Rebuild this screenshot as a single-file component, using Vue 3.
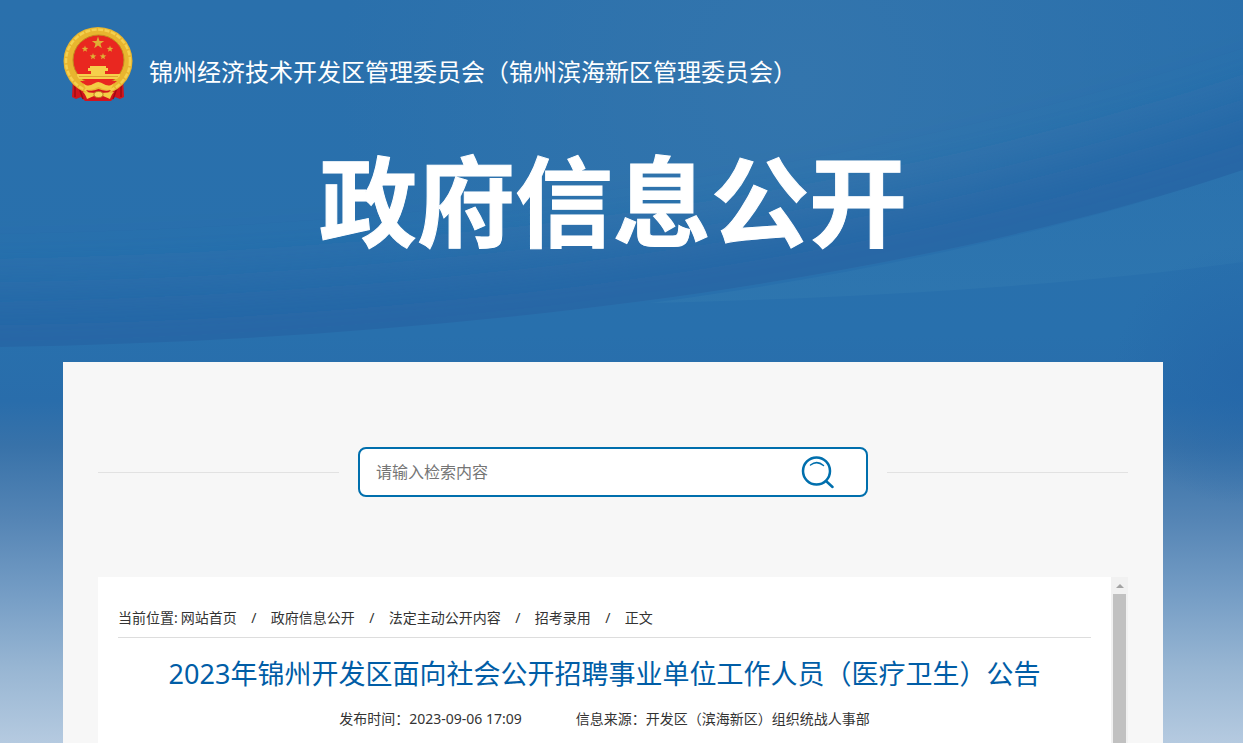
<script setup>
const crumbs = ['网站首页', '政府信息公开', '法定主动公开内容', '招考录用', '正文']
const stars = [
  { x: 48, y: 28, r: 6.5 },
  { x: 35, y: 34, r: 3.5 },
  { x: 60, y: 34, r: 3.5 },
  { x: 43, y: 41.5, r: 3.5 },
  { x: 53, y: 41.5, r: 3.5 },
]
function starPoints({ x, y, r }) {
  return Array.from({ length: 10 }, (_, i) => {
    const d = i % 2 ? r * 0.4 : r
    const a = (Math.PI / 5) * i - Math.PI / 2
    return `${(x + d * Math.cos(a)).toFixed(2)},${(y + d * Math.sin(a)).toFixed(2)}`
  }).join(' ')
}
</script>

<template>
  <div class="page">
    <svg class="backdrop" viewBox="0 0 1243 743" preserveAspectRatio="none" aria-hidden="true">
      <defs>
        <linearGradient id="sky" x1="0" y1="0" x2="0" y2="1">
          <stop offset="0" stop-color="#2a70ac" />
          <stop offset="0.45" stop-color="#2870ad" />
          <stop offset="0.54" stop-color="#296dab" />
          <stop offset="0.6" stop-color="#3872a9" />
          <stop offset="0.7" stop-color="#5585b5" />
          <stop offset="0.8" stop-color="#759dc5" />
          <stop offset="0.9" stop-color="#98b6d3" />
          <stop offset="1" stop-color="#b5cae0" />
        </linearGradient>
        <radialGradient id="glow" gradientUnits="userSpaceOnUse" cx="800" cy="80" r="460">
          <stop offset="0" stop-color="#3375ad" />
          <stop offset="1" stop-color="#3375ad" stop-opacity="0" />
        </radialGradient>
        <radialGradient id="corner" gradientUnits="userSpaceOnUse" cx="1243" cy="375" r="130">
          <stop offset="0" stop-color="#2466a8" stop-opacity="0.8" />
          <stop offset="1" stop-color="#2466a8" stop-opacity="0" />
        </radialGradient>
        <linearGradient id="band" x1="0" y1="0" x2="0" y2="1">
          <stop offset="0" stop-color="#2e76b0" stop-opacity="0.4" />
          <stop offset="1" stop-color="#3179b0" stop-opacity="0.6" />
        </linearGradient>
        <clipPath id="above">
          <path d="M0 0H1243V170C900 285 440 340 0 347Z" />
        </clipPath>
        <filter id="soft" x="-20%" y="-60%" width="140%" height="220%">
          <feGaussianBlur stdDeviation="30" />
        </filter>
      </defs>
      <path d="M0 0H1243V743H0Z" fill="url(#sky)" />
      <g clip-path="url(#above)">
        <path d="M0 0H1243V360H0Z" fill="url(#glow)" />
        <path
          d="M-80 348C420 345 900 290 1340 135"
          fill="none"
          stroke="#2464a4"
          stroke-width="110"
          stroke-opacity="0.85"
          filter="url(#soft)"
        />
      </g>
      <path d="M1243 170C1060 232 860 275 650 303C850 298 1060 287 1243 262Z" fill="url(#band)" />
      <path d="M1083 245H1243V535H1083Z" fill="url(#corner)" />
    </svg>

    <div class="container">
      <header class="brand">
        <svg class="emblem" viewBox="13 11 70 76" role="img" aria-label="国徽">
          <path d="M23 62L22 82L26 84L31 82L35 86H61L65 82L70 84L74 82L73 62Z" fill="#d3141c" />
          <path d="M28 70L33 84M68 70L63 84M25 70L25 82M71 70L71 82" stroke="#9e0b13" stroke-width="1.5" fill="none" />
          <ellipse cx="48" cy="46" rx="34.5" ry="34" fill="#e8b52f" />
          <ellipse cx="48" cy="46" rx="32" ry="31.5" fill="none" stroke="#f5d04e" stroke-width="2.5" stroke-dasharray="5 1.5" />
          <ellipse cx="48.5" cy="45" rx="25.5" ry="25" fill="#e92720" stroke="#c38b1f" stroke-width="1" />
          <polygon v-for="(s, i) in stars" :key="i" :points="starPoints(s)" fill="#dfae35" />
          <path d="M40 51H56V53H58V56H55V59H70V61L67 64H29L27 61V59H41V56H38V53H40Z" fill="#f6cf4b" />
          <path d="M29 61.5H68" stroke="#e0a030" stroke-width="1" />
          <path d="M30 66H67L61 71L54 70L48.5 67L43 70L36 71Z" fill="#e92720" />
          <path d="M33 68C39 74 42 68 48.5 67C54 68 58 74 64 68L61 74C55 76 53 74 48.5 72C44 74 41 76 36 74Z" fill="#f3cd45" />
          <path d="M36 75Q42 77 48.5 74Q55 77 61 75L58 78H39Z" fill="#d3141c" />
          <path d="M33 77L46 78L44 81L37 84C36 81 35 79 33 77ZM64 77L51 78L53 81L60 84C61 81 62 79 64 77Z" fill="#f3cd45" />
          <ellipse cx="48.5" cy="79.5" rx="4.5" ry="3" fill="#f8d95b" stroke="#b97919" stroke-width="1" />
        </svg>
        <span class="org">锦州经济技术开发区管理委员会（锦州滨海新区管理委员会）</span>
      </header>

      <h1 class="headline">政府信息公开</h1>

      <main class="sheet">
        <form class="search" @submit.prevent>
          <div class="search-box">
            <input type="text" aria-label="检索内容" placeholder="请输入检索内容" />
            <button type="submit" aria-label="检索">
              <svg viewBox="0 0 34 34" aria-hidden="true">
                <circle cx="16.5" cy="16" r="13.5" stroke-width="2.5" />
                <path d="M10.5 10Q17 5 23.5 10.5" stroke-width="1.5" />
                <path d="M26 26L32.5 32" stroke-width="2.5" />
              </svg>
            </button>
          </div>
        </form>

        <div class="viewer">
          <article class="article">
            <nav class="crumbs" aria-label="当前位置">
              <span class="here">当前位置:</span>
              <template v-for="(c, i) in crumbs" :key="c">
                <span v-if="i" class="slash">/</span>
                <a href="#">{{ c }}</a>
              </template>
            </nav>
            <h2>2023年锦州开发区面向社会公开招聘事业单位工作人员（医疗卫生）公告</h2>
            <div class="meta">
              <span>发布时间：2023-09-06 17:09</span>
              <span>信息来源：开发区（滨海新区）组织统战人事部</span>
            </div>
          </article>
          <div class="track" aria-hidden="true">
            <div class="arrow"></div>
            <div class="thumb"></div>
          </div>
        </div>
      </main>
    </div>
  </div>
</template>

<style>
html,
body,
#app {
  height: 100%;
}
body {
  margin: 0;
  overflow: hidden;
}
</style>

<style scoped>
.page {
  position: relative;
  min-height: 100%;
  box-sizing: border-box;
  padding-right: 17px;
  font-family: "Noto Sans", "Noto Sans CJK SC", sans-serif;
  font-size: 14px;
  color: #333;
}
.backdrop {
  position: absolute;
  inset: 0;
  width: 100%;
  height: 100%;
}
.container {
  position: relative;
  display: flex;
  flex-direction: column;
  min-height: 100vh;
  max-width: 1100px;
  margin: 0 auto;
}
.brand {
  display: flex;
  align-items: center;
  gap: 16px;
  padding-top: 26px;
  color: #fff;
}
.emblem {
  width: 70px;
  height: 76px;
}
.org {
  padding-top: 16px;
  font-size: 24px;
  line-height: 36px;
}
.headline {
  margin: 0;
  padding: 29px 0 91px;
  text-align: center;
  font-size: 98px;
  line-height: 140px;
  font-weight: 700;
  color: #fff;
  -webkit-text-stroke: 1px #fff;
}
.sheet {
  flex: 1;
  display: flex;
  flex-direction: column;
  padding: 85px 35px 0;
  background: #f7f7f7;
}
.search {
  display: flex;
  align-items: center;
  gap: 19px;
}
.search::before,
.search::after {
  content: "";
  flex: 1;
  height: 1px;
  background: #e2e2e2;
}
.search-box {
  display: flex;
  align-items: center;
  box-sizing: border-box;
  width: 510px;
  height: 50px;
  padding: 0 32px 0 16px;
  border: 2px solid #006fad;
  border-radius: 8px;
  background: #fff;
}
.search-box input {
  flex: 1;
  min-width: 0;
  padding: 0;
  border: 0;
  outline: 0;
  background: none;
  font: inherit;
  font-size: 16px;
}
.search-box input::placeholder {
  color: #757575;
}
.search-box button {
  width: 34px;
  height: 34px;
  padding: 0;
  border: 0;
  background: none;
}
.search-box svg {
  display: block;
  fill: none;
  stroke: #006fad;
  stroke-linecap: round;
}
.viewer {
  flex: 1;
  display: flex;
  margin-top: 80px;
}
.article {
  flex: 1;
  padding: 26px 20px 0;
  background: #fff;
}
.crumbs {
  display: flex;
  line-height: 30px;
  padding-bottom: 4px;
  border-bottom: 1px solid #ddd;
}
.here {
  margin-right: 3px;
}
.crumbs a {
  color: inherit;
  text-decoration: none;
}
.slash {
  width: 34px;
  text-align: center;
}
h2 {
  margin: 16px 0 0;
  text-align: center;
  font-size: 27px;
  line-height: 40px;
  font-weight: 400;
  color: #005da6;
}
.meta {
  display: flex;
  justify-content: center;
  gap: 54px;
  margin-top: 15px;
  line-height: 20px;
}
.track {
  display: flex;
  flex-direction: column;
  align-items: center;
  width: 17px;
  background: #f1f1f1;
}
.arrow {
  margin: 7px 0 6px;
  border: 4px solid transparent;
  border-top: 0;
  border-bottom-color: #a3a3a3;
}
.thumb {
  flex: 1;
  width: 13px;
  background: #c1c1c1;
}
</style>
